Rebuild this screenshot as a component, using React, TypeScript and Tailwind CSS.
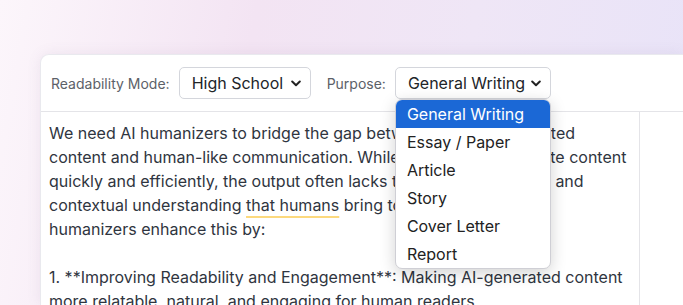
import React from "react";

function Chevron() {
  return (
    <svg width="10" height="7" viewBox="0 0 10 7" className="shrink-0">
      <path d="M1.2 1.5 L5 5.2 L8.8 1.5" fill="none" stroke="#222" strokeWidth="2" strokeLinecap="round" strokeLinejoin="round" />
    </svg>
  );
}

function FakeSelect({ value, width }: { value: string; width: string }) {
  return (
    <div
      className={`${width} h-[32px] flex items-center justify-between pl-3 pr-[9px] bg-white border border-[#d4d6dc] rounded-[5px] text-[16px] text-[#212529]`}
    >
      <span>{value}</span>
      <Chevron />
    </div>
  );
}

const options = ["General Writing", "Essay / Paper", "Article", "Story", "Cover Letter", "Report"];

export default function App() {
  return (
    <div
      className="h-[305px] w-[683px] overflow-hidden bg-[linear-gradient(100deg,#fcf6fb_0%,#f3e4f3_35%,#efe6f6_65%,#e8e3f8_100%)] pt-[54px] pl-[40px]"
      style={{ fontFamily: "Inter, 'Noto Sans', sans-serif" }}
    >
      <div className="h-full bg-white rounded-tl-[9px] border-l border-t border-[#e9e9ee] shadow-[0_0_14px_rgba(120,100,140,0.10)] flex flex-col">
        <div className="h-[57px] shrink-0 flex items-center pl-[10px] border-b border-[#e4e4e8]">
          <span className="text-[14px] text-[#5c6168] mr-[9px]">Readability Mode:</span>
          <FakeSelect value="High School" width="w-[132px]" />
          <span className="text-[14px] text-[#5c6168] ml-[16px] mr-[9px]">Purpose:</span>
          <div className="relative">
            <FakeSelect value="General Writing" width="w-[156px]" />
            <div className="absolute left-0 top-[32px] w-[156px] z-10 bg-white border border-[#cfcfd5] rounded-[7px] shadow-[0_4px_16px_rgba(0,0,0,0.18)] overflow-hidden">
              {options.map((o, i) => (
                <div
                  key={o}
                  className={`h-[28px] flex items-center pl-[11px] text-[16px] ${
                    i === 0 ? "bg-[#1b68d6] text-white" : "text-[#222]"
                  }`}
                >
                  {o}
                </div>
              ))}
            </div>
          </div>
        </div>
        <div className="flex-1 flex">
          <div className="w-[599px] shrink-0 border-r border-[#e4e4e8] pl-[8px] pt-[9px] text-[16px] leading-[24px] text-[#2f3540] whitespace-nowrap overflow-hidden">
            <div>We need AI humanizers to bridge the gap between pure AI-generated</div>
            <div>content and human-like communication. While AI tools can generate content</div>
            <div>quickly and efficiently, the output often lacks the humor, creativity, and</div>
            <div>
              contextual understanding{" "}
              <span className="underline decoration-[#fcd97e] decoration-2 underline-offset-[5px]">that humans</span>{" "}
              bring to the table. AI
            </div>
            <div>humanizers enhance this by:</div>
            <div className="h-[24px]"></div>
            <div>1. **Improving Readability and Engagement**: Making AI-generated content</div>
            <div>more relatable, natural, and engaging for human readers.</div>
          </div>
          <div className="flex-1"></div>
        </div>
      </div>
    </div>
  );
}
